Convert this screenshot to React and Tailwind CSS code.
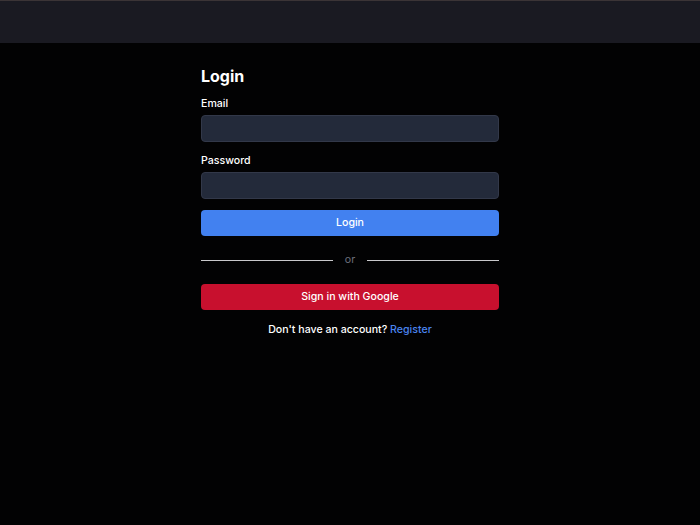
import React, { useState } from 'react';

const LoginPage = () => {
  const [email, setEmail] = useState('');
  const [password, setPassword] = useState('');

  return (
    <div className="min-h-screen bg-[#020203] font-['Inter',sans-serif] text-white">
      {/* Top bar */}
      <div className="h-[43px] border-t border-[#3b3436] bg-[#1a1a22]" />

      {/* Login form */}
      <div className="mx-auto w-[298px] pt-[22px]">
        <h1 className="text-[16px] font-bold leading-[22px]">Login</h1>

        <label className="mt-[9px] block text-[10.6px] font-medium leading-[16px]">Email</label>
        <input
          type="email"
          value={email}
          onChange={(e) => setEmail(e.target.value)}
          className="mt-[3px] block h-[27px] w-full rounded-[4px] border border-[#323849] bg-[#232a3a] px-2 text-[12px] text-white outline-none"
        />

        <label className="mt-[11px] block text-[10.6px] font-medium leading-[16px]">Password</label>
        <input
          type="password"
          value={password}
          onChange={(e) => setPassword(e.target.value)}
          className="mt-[3px] block h-[27px] w-full rounded-[4px] border border-[#323849] bg-[#232a3a] px-2 text-[12px] text-white outline-none"
        />

        <button className="mt-[11px] flex h-[26px] w-full items-center justify-center rounded-[4px] bg-[#4281f0] text-[10.6px] font-medium">
          Login
        </button>

        {/* Divider */}
        <div className="mt-[16px] flex items-center gap-[12px]">
          <div className="h-px flex-1 bg-[#c9c9cc]" />
          <span className="text-[10.6px] leading-[16px] text-[#6b6f7c]">or</span>
          <div className="h-px flex-1 bg-[#c9c9cc]" />
        </div>

        <button className="mt-[16px] flex h-[26px] w-full items-center justify-center rounded-[4px] bg-[#c8102e] text-[10.6px] font-medium">
          Sign in with Google
        </button>

        <p className="mt-[12px] text-center text-[10.6px] font-medium leading-[16px]">
          Don't have an account? <a className="text-[#4a84f0]">Register</a>
        </p>
      </div>
    </div>
  );
};

export default function App() {
  return <LoginPage />;
}
